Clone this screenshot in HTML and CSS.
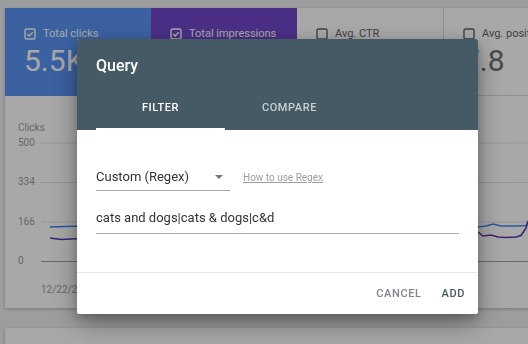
FILE: index.html
```html
<!DOCTYPE html>
<html lang="en">
<head>
  <meta charset="UTF-8">
  <title>Performance - Query filter</title>
  <link rel="stylesheet" href="styles.css">
</head>
<body>
  <div class="page">
    <div class="report">
      <div class="metrics">
        <div class="metric clicks">
          <div class="metric-label">
            <svg class="cb" viewBox="0 0 12 12"><rect x="1" y="1" width="10" height="10" rx="1.5" fill="none" stroke="currentColor" stroke-width="1.4"/><path d="M3.2 6.1l1.9 1.9 3.7-3.8" fill="none" stroke="currentColor" stroke-width="1.4"/></svg>
            <span>Total clicks</span>
          </div>
          <div class="metric-value">5.5K</div>
        </div>
        <div class="metric impressions">
          <div class="metric-label">
            <svg class="cb" viewBox="0 0 12 12"><rect x="1" y="1" width="10" height="10" rx="1.5" fill="none" stroke="currentColor" stroke-width="1.4"/><path d="M3.2 6.1l1.9 1.9 3.7-3.8" fill="none" stroke="currentColor" stroke-width="1.4"/></svg>
            <span>Total impressions</span>
          </div>
          <div class="metric-value">412K</div>
        </div>
        <div class="metric plain">
          <div class="metric-label">
            <svg class="cb" viewBox="0 0 12 12"><rect x="1" y="1" width="10" height="10" rx="1.5" fill="none" stroke="currentColor" stroke-width="1.4"/></svg>
            <span>Avg. CTR</span>
          </div>
          <div class="metric-value">1.3%</div>
        </div>
        <div class="metric plain last">
          <div class="metric-label">
            <svg class="cb" viewBox="0 0 12 12"><rect x="1" y="1" width="10" height="10" rx="1.5" fill="none" stroke="currentColor" stroke-width="1.4"/></svg>
            <span>Avg. position</span>
          </div>
          <div class="metric-value">7.8</div>
        </div>
      </div>

      <div class="chart">
        <div class="chart-title">Clicks</div>
        <div class="plot">
          <div class="y-axis">
            <span>500</span>
            <span>334</span>
            <span>166</span>
            <span>0</span>
          </div>
          <svg class="lines" width="560" height="130" viewBox="0 0 560 130">
            <line x1="0" y1="6" x2="560" y2="6" stroke="#e3e3e3"/>
            <line x1="0" y1="45.5" x2="560" y2="45.5" stroke="#e3e3e3"/>
            <line x1="0" y1="85" x2="560" y2="85" stroke="#e3e3e3"/>
            <line x1="0" y1="124.5" x2="560" y2="124.5" stroke="#9e9e9e"/>
            <polyline fill="none" stroke="#4285f4" stroke-width="1.6" points="9,90 25,89.5 40,89 437,90 445,89 452,87 460,89 475,89 485,88.5 487,86"/>
            <polyline fill="none" stroke="#5e35b1" stroke-width="1.6" points="9,101 20,102.5 30,102 40,101.5 437,95 442,99 450,98 457,100 465,100.5 475,100 480,98.5 485,91 487,84"/>
          </svg>
        </div>
        <div class="x-axis">12/22/2019</div>
      </div>
    </div>

    <div class="report next"></div>
  </div>

  <div class="scrim">
    <div class="dialog">
      <div class="dialog-head">
        <div class="dialog-title">Query</div>
        <div class="tabs">
          <div class="tab active">FILTER</div>
          <div class="tab">COMPARE</div>
        </div>
      </div>

      <div class="dialog-body">
        <div class="filter-row">
          <div class="select">
            <span>Custom (Regex)</span>
            <span class="caret"></span>
          </div>
          <a class="help" href="#">How to use Regex</a>
        </div>
        <div class="text-field">cats and dogs|cats &amp; dogs|c&amp;d</div>
      </div>

      <div class="dialog-foot">
        <button class="btn cancel">CANCEL</button>
        <button class="btn add">ADD</button>
      </div>
    </div>
  </div>
</body>
</html>
```

FILE: styles.css
```css
html, body {
  overflow: hidden;
}

body {
  margin: 0;
  font-family: Roboto, 'Liberation Sans', Arial, sans-serif;
  background-color: #eceff1;
  height: 344px;
}

.page {
  padding: 8px 0 0 5px;
}

.report {
  width: 620px;
  background: white;
  box-shadow: 0 1px 3px rgba(0, 0, 0, 0.25);
}

.report.next {
  margin-top: 20px;
  height: 60px;
}

/* metric cards */

.metrics {
  display: flex;
  height: 88px;
}

.metric {
  width: 146px;
  box-sizing: border-box;
  padding: 19px 0 0 19px;
  color: white;
}

.metric.clicks {
  background-color: #5a93f5;
}

.metric.impressions {
  background-color: #7247cc;
}

.metric.plain {
  color: #5f6368;
  border-bottom: 1px solid #dadce0;
}

.metric.last {
  flex: 1;
  border-left: 1px solid #dadce0;
}

.metric-label {
  display: flex;
  align-items: center;
  gap: 7px;
  font-size: 11px;
  line-height: 14px;
}

.cb {
  width: 12px;
  height: 12px;
}

.metric-value {
  margin-top: 3px;
  font-size: 30px;
  line-height: 34px;
}

.metric.plain .metric-value {
  color: #6b7075;
}

/* chart */

.chart {
  padding: 26px 0 12px 13px;
  color: #9aa0a6;
  font-size: 10px;
  line-height: 12px;
}

.plot {
  display: flex;
  margin-top: 3px;
  height: 130px;
}

.y-axis {
  width: 23px;
  display: flex;
  flex-direction: column;
  justify-content: space-between;
}

.lines {
  display: block;
}

.x-axis {
  margin: 17px 0 0 23px;
}

/* dialog */

.scrim {
  position: fixed;
  inset: 0;
  background: rgba(0, 0, 0, 0.34);
}

.dialog {
  position: absolute;
  left: 77px;
  top: 39px;
  width: 401px;
  background: white;
  border-radius: 2px;
  box-shadow: 0 10px 28px rgba(0, 0, 0, 0.35), 0 4px 10px rgba(0, 0, 0, 0.2);
  overflow: hidden;
}

.dialog-head {
  background-color: #455a64;
  padding: 17px 19px 0;
  color: white;
}

.dialog-title {
  font-size: 16px;
  font-weight: 500;
  line-height: 20px;
}

.tabs {
  display: flex;
  margin-top: 10px;
}

.tab {
  width: 129px;
  height: 42px;
  display: flex;
  align-items: center;
  justify-content: center;
  font-size: 11px;
  font-weight: 500;
  letter-spacing: 0.6px;
  color: rgba(255, 255, 255, 0.7);
  border-bottom: 2px solid transparent;
}

.tab.active {
  color: white;
  border-bottom-color: white;
}

.dialog-body {
  padding: 39px 19px 38px;
  border-bottom: 1px solid #e8e8e8;
}

.filter-row {
  display: flex;
  align-items: center;
  gap: 13px;
}

.select {
  width: 134px;
  display: flex;
  justify-content: space-between;
  align-items: center;
  font-size: 13px;
  line-height: 16px;
  color: #333;
  padding-bottom: 5px;
  border-bottom: 1px solid #a8a8a8;
}

.caret {
  width: 0;
  height: 0;
  margin-right: 7px;
  border-left: 4px solid transparent;
  border-right: 4px solid transparent;
  border-top: 4px solid #777;
}

.help {
  font-size: 10px;
  color: #9e9e9e;
  margin-bottom: 5px;
}

.text-field {
  margin-top: 19px;
  font-size: 13px;
  line-height: 16px;
  color: #333;
  padding-bottom: 7px;
  border-bottom: 1px solid #a8a8a8;
}

.dialog-foot {
  height: 41px;
  display: flex;
  justify-content: flex-end;
  align-items: center;
  padding-right: 5px;
  gap: 4px;
}

.btn {
  border: none;
  background: none;
  padding: 4px 8px;
  font-family: inherit;
  font-size: 11px;
  font-weight: 500;
  letter-spacing: 0.6px;
}

.btn.cancel {
  color: #80868b;
}

.btn.add {
  color: #455a64;
}
```
